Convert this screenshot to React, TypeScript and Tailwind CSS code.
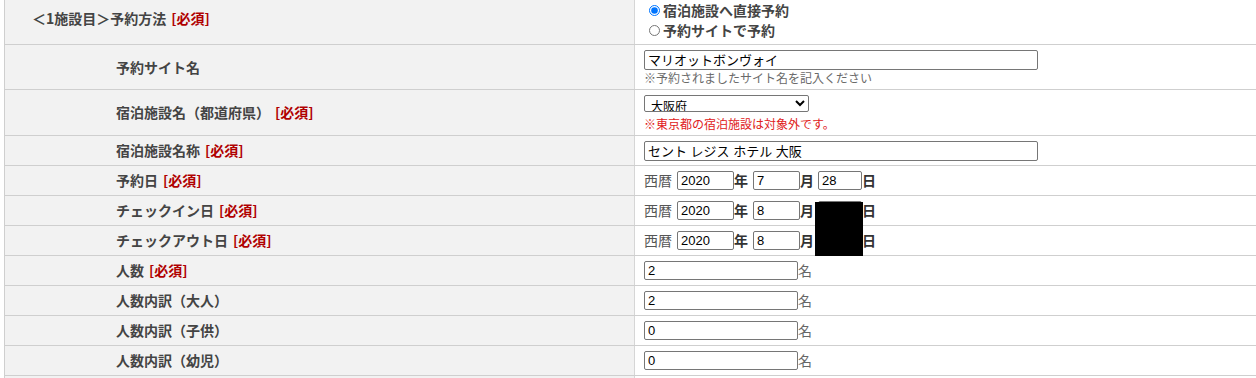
import React from 'react';

const jp = "font-['Noto_Sans_CJK_JP','Noto_Sans',sans-serif]";
const inputCls =
    "border border-[#767676] rounded-[2px] bg-white px-[3px] text-[13px] text-black font-['Liberation_Sans','Noto_Sans_CJK_JP',sans-serif] outline-none";

function Req() {
    return <span className="text-[#b00000] ml-[5px]">[必須]</span>;
}

function Row({ h, label, pl = 'pl-[111px]', children }: { h: string; label: React.ReactNode; pl?: string; children: React.ReactNode }) {
    return (
        <div className={`flex border-b border-[#cfcfcf] ${h}`}>
            <div className={`w-[630px] shrink-0 bg-[#f2f2f2] border-r border-[#d6d6d6] flex items-center ${pl} text-[14px] font-bold text-[#444]`}>
                {label}
            </div>
            <div className="flex-1 bg-white flex flex-col justify-center pl-[9px]">{children}</div>
        </div>
    );
}

function DateField({ y, m, d }: { y: string; m: string; d: string }) {
    return (
        <div className="flex items-center text-[14px] text-[#555]">
            <span className="mr-[5px]">西暦</span>
            <input className={`${inputCls} w-[57px] h-[19px]`} defaultValue={y} />
            <span className="font-bold text-[#333]">年</span>
            <input className={`${inputCls} w-[47px] h-[19px] ml-[5px]`} defaultValue={m} />
            <span className="font-bold text-[#333]">月</span>
            <input className={`${inputCls} w-[44px] h-[19px] ml-[4px]`} defaultValue={d} />
            <span className="font-bold text-[#333]">日</span>
        </div>
    );
}

function CountField({ v }: { v: string }) {
    return (
        <div className="flex items-center text-[14px] text-[#666]">
            <input className={`${inputCls} w-[154px] h-[19px]`} defaultValue={v} />
            <span>名</span>
        </div>
    );
}

export default function App() {
    return (
        <div className={`w-[1256px] h-[378px] overflow-hidden bg-white pl-[4px] ${jp}`}>
            <div className="relative -mt-[7px] border-l border-[#cfcfcf]">
                <Row h="h-[52px]" pl="pl-[27px]" label={<>＜1施設目＞予約方法<Req /></>}>
                    <div className="flex flex-col gap-[5px] mt-[3px] text-[14px] font-bold text-[#444] leading-[15px]">
                        <label className="flex items-center">
                            <input type="radio" name="method" defaultChecked className="w-[11px] h-[11px] m-0 ml-[5px] mr-[3px] accent-[#0075ff]" />
                            宿泊施設へ直接予約
                        </label>
                        <label className="flex items-center">
                            <input type="radio" name="method" className="w-[11px] h-[11px] m-0 ml-[5px] mr-[3px]" />
                            予約サイトで予約
                        </label>
                    </div>
                </Row>
                <Row h="h-[45px]" label="予約サイト名">
                    <input className={`${inputCls} w-[394px] h-[20px]`} defaultValue="マリオットボンヴォイ" />
                    <div className="text-[12px] text-[#6a6a6a] leading-[14px] mt-[1px]">※予約されましたサイト名を記入ください</div>
                </Row>
                <Row h="h-[46px]" label={<>宿泊施設名（都道府県）<Req /></>}>
                    <select className="w-[165px] h-[17px] p-0 pl-[2px] border border-[#767676] rounded-[2px] text-[12px] leading-[12px] text-black bg-white" defaultValue="osaka">
                        <option value="osaka">大阪府</option>
                    </select>
                    <div className="text-[12px] text-[#e02020] leading-[14px] mt-[5px]">※東京都の宿泊施設は対象外です。</div>
                </Row>
                <Row h="h-[30px]" label={<>宿泊施設名称<Req /></>}>
                    <input className={`${inputCls} w-[394px] h-[20px]`} defaultValue="セント レジス ホテル 大阪" />
                </Row>
                <Row h="h-[30px]" label={<>予約日<Req /></>}>
                    <DateField y="2020" m="7" d="28" />
                </Row>
                <Row h="h-[30px]" label={<>チェックイン日<Req /></>}>
                    <DateField y="2020" m="8" d="" />
                </Row>
                <Row h="h-[30px]" label={<>チェックアウト日<Req /></>}>
                    <DateField y="2020" m="8" d="" />
                </Row>
                <Row h="h-[30px]" label={<>人数<Req /></>}>
                    <CountField v="2" />
                </Row>
                <Row h="h-[30px]" label="人数内訳（大人）">
                    <CountField v="2" />
                </Row>
                <Row h="h-[30px]" label="人数内訳（子供）">
                    <CountField v="0" />
                </Row>
                <Row h="h-[30px]" label="人数内訳（幼児）">
                    <CountField v="0" />
                </Row>
                <Row h="h-[30px]" label="">
                    <span />
                </Row>
                {/* redaction box over the day fields */}
                <div className="absolute left-[810px] top-[209px] w-[48px] h-[54px] bg-black" />
            </div>
        </div>
    );
}
